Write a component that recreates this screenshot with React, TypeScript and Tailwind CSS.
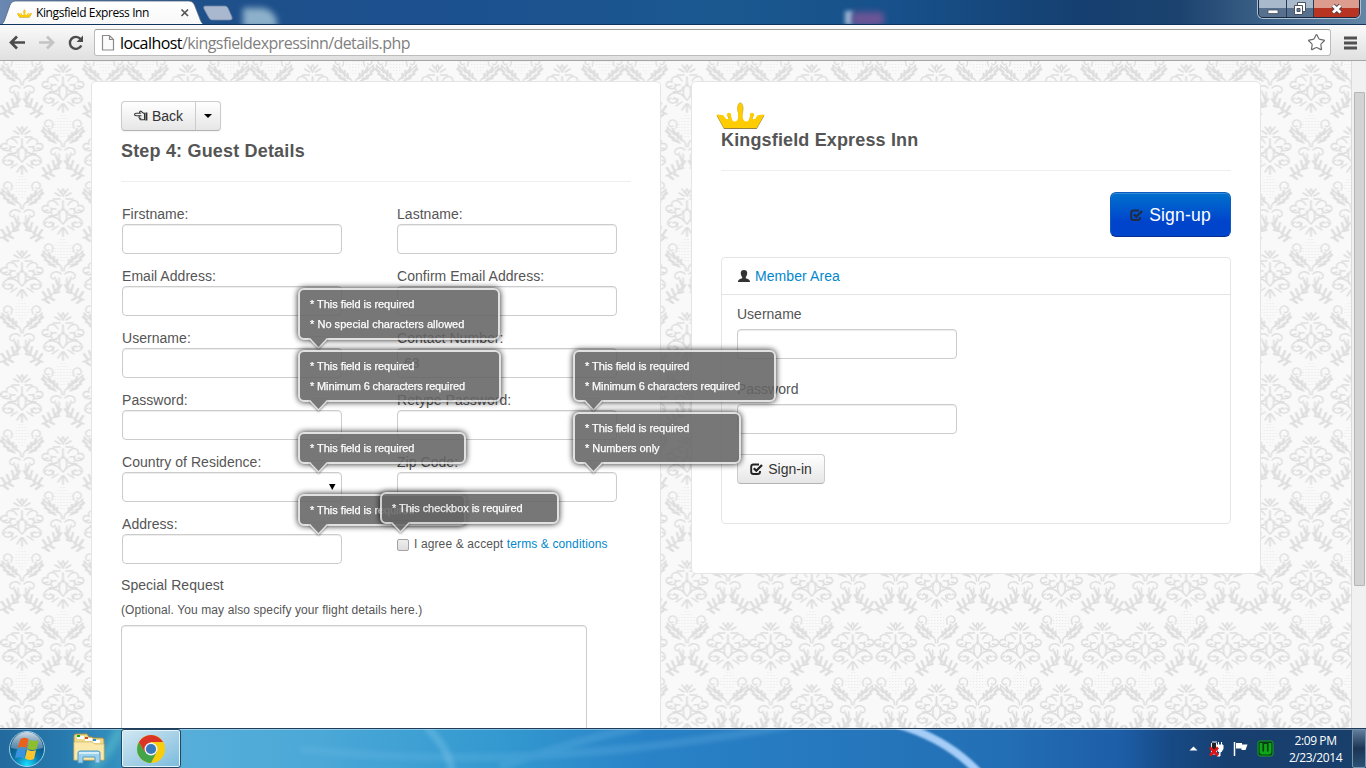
import React from "react";
import { Star } from "lucide-react";

function Damask() {
  return (
    <svg className="absolute inset-0 h-full w-full" aria-hidden="true">
      <defs>
        <g id="half" fill="none" stroke="#dedede" strokeWidth="1.5" strokeLinecap="round">
          <path d="M0 -25c2 2 2 4 0 7M3 -18l5 -3M3 -15l7 0M2 -21l3 -4M0 -13v9" />
          <path d="M5 -9c4 -7 12 -5 10 1c6 -2 8 4 3 6c-5 2 -8 -1 -6 -4M7 -5c4 -1 7 2 4 5M4 -3c1 4 5 6 10 5" />
          <path d="M0 -6c5 4 5 12 0 16M3 7c4 -5 11 -6 15 -1c4 5 -3 9 -7 6c-2 -3 1 -5 3 -3M5 12l6 4M1 14l4 6M0 14v8" />
          <path d="M6 1l7 1M15 -4l4 1M16 8l3 2M9 9l1 4" />
        </g>
        <g id="vine" fill="none" stroke="#dedede" strokeWidth="1.4" strokeLinecap="round">
          <path d="M11 38c-3 -6 2 -10 6 -7c3 3 0 7 -3 5M1 57c-1 -8 9 -8 19 -20M4 51c4 -4 7 -6 10 -12M7 53c7 -2 11 -7 13 -14" />
          <path strokeWidth="2.3" d="M6 50l0 -4M9 48l0 -5M13 44l1 -5M9 51l5 -1M13 48l5 -2M17 44l4 -3" />
          <path d="M2 60c4 -4 11 -2 10 3c-1 3 -5 2 -4 0M4 64c-2 8 4 17 17 22" />
          <path strokeWidth="2.3" d="M5 76l-3 -5M8 79l-4 -1M8 78l2 -7M12 82l3 -7M16 84l4 -6M13 84l-4 2M18 86l-4 3M5 71l2 -5" />
        </g>
        <g id="motif">
          <use href="#half" />
          <use href="#half" transform="scale(-1 1)" />
        </g>
        <g id="vines">
          <use href="#vine" />
          <use href="#vine" transform="scale(-1 1)" />
        </g>
        <pattern id="dots" width="3" height="3" patternUnits="userSpaceOnUse">
          <rect width="1" height="1" fill="#e8e8e8" />
        </pattern>
        <pattern id="damask" x="0.6" y="-33" width="124.8" height="124" patternUnits="userSpaceOnUse">
          <rect width="125" height="124" fill="#f9f9f9" />
          <path d="M62.4 84l12 14l-12 14l-12 -14zM21 20l10 14l-10 14l-10 -14zM104 20l10 14l-10 14l-10 -14z" fill="url(#dots)" />
          <use href="#motif" x="62.4" y="62" />
          <use href="#vines" x="62.4" y="62" />
          <use href="#vines" x="62.4" y="-62" />
          <use href="#motif" x="21.4" y="0" />
          <use href="#motif" x="21.4" y="124" />
          <use href="#motif" x="103.4" y="0" />
          <use href="#motif" x="103.4" y="124" />
          <use href="#vines" x="21.4" y="0" />
          <use href="#vines" x="103.4" y="0" />
        </pattern>
      </defs>
      <rect width="100%" height="100%" fill="url(#damask)" />
    </svg>
  );
}

const crownBody =
  "M.5 12.500L6 13Q8 13 8.500 15Q10.500 18.500 13 16.500L12 14h3Q16 20 19 19.500Q22 19 22.500 14L22 8h4.600L26.200 14Q27 19 30 19.500Q33 20 34 14h3L36 16.500Q38.500 18.500 40.500 15Q41 13 43 13L48.500 12.500L40.700 26H8z";

function Crown({ className }: { className: string }) {
  return (
    <svg viewBox="0 0 49 27" className={className}>
      <path d={crownBody} fill="#9a8142" transform="translate(0 .9)" />
      <g fill="#fc0">
        <path d={crownBody} />
        <ellipse cx="24.300" cy="6.500" rx="2.900" ry="5.800" stroke="#a58a3a" strokeWidth=".4" />
        <path d="M22.200 9h4.200v6h-4.200z" />
        <circle cx="13" cy="13" r="2.200" />
        <circle cx="36" cy="13" r="2.200" />
      </g>
    </svg>
  );
}

function CheckIcon({ className }: { className: string }) {
  return (
    <svg viewBox="0 0 13 12" width="13" height="12" className={className} fill="none" stroke="currentColor">
      <path d="M9 1.500H3.500Q1.200 1.500 1.200 3.800V8.700Q1.200 11 3.500 11H7.500Q10 11 10 8.700V8" strokeWidth="1.900" />
      <path d="M3.800 5.200L6.300 7.700L12 2" strokeWidth="2.300" />
    </svg>
  );
}

function HandIcon() {
  return (
    <svg viewBox="0 0 14 12" width="14" height="12" className="mr-[4px]" fill="none" stroke="#333" strokeWidth="1.100">
      <path d="M6 5.800H2Q.6 5.600 .6 4.400Q.7 3.200 2 3.200H6.200L5.600 2.300Q5.700 .9 7 1.200L9.500 3.200H10.500V9.800H7.200Q5.600 9.700 5.700 8.300Q4.600 7.600 5.100 6.700Q5.200 6 6 5.800zM6 5.800H7.500M5.800 8.200H7.300" />
      <path d="M12.400 2.500V10.500" strokeWidth="2" />
    </svg>
  );
}

function WindowControls() {
  return (
    <div className="absolute right-[6px] top-[-1px] flex h-[19px] overflow-hidden rounded-b-[5px] border border-[#1a2740] shadow-[0_0_0_1px_#a9bfd4]">
      <div className="flex w-[28px] items-center justify-center border-r border-[#283a54] bg-linear-to-b from-[#a8b9cc] from-45% to-[#56708e] to-50%">
        <svg width="14" height="14"><rect x="2" y="8" width="10" height="3.5" fill="#fff" stroke="#4b5362" strokeWidth=".8" /></svg>
      </div>
      <div className="flex w-[27px] items-center justify-center border-r border-[#283a54] bg-linear-to-b from-[#a8b9cc] from-45% to-[#56708e] to-50%">
        <svg width="14" height="14">
          <path d="M4.500 0.500h8v9h-8z" fill="#fff" stroke="#4b5362" />
          <path d="M1.500 3.500h8v9h-8z" fill="#fff" stroke="#4b5362" />
          <path d="M4 6.500h3v3h-3z" fill="#6a809b" stroke="#4b5362" />
        </svg>
      </div>
      <div className="flex w-[45px] items-center justify-center bg-linear-to-b from-[#dc9d8f] from-45% to-[#b83422] to-50%">
        <svg width="14" height="14">
          <path d="M3 3.500l7.500 7M10.500 3.500l-7.500 7" stroke="#56414a" strokeWidth="4.800" />
          <path d="M3 3.500l7.500 7M10.500 3.500l-7.500 7" stroke="#fff" strokeWidth="3" />
        </svg>
      </div>
    </div>
  );
}

function TitleBar() {
  return (
    <div className="relative h-[25px] overflow-hidden border-b border-[#12345f] bg-[linear-gradient(90deg,#6b88b2_0px,#1f5089_180px,#1c508f_430px,#1b5890_720px,#17508a_900px,#153f70_1080px,#1c436f_1180px,#6385a5_1366px)]">
      <div className="absolute left-[243px] top-[8px] h-[20px] w-[34px] rounded-tr-[16px] bg-[#a9c9da] opacity-80 blur-[3px]" />
      <div className="absolute left-[845px] top-[11px] h-[14px] w-[8px] bg-[#9dbad5] blur-[2px]" />
      <div className="absolute left-[852px] top-[12px] h-[14px] w-[32px] rounded bg-[#6c5596] blur-[3px]" />
      <svg className="absolute left-0 top-0" width="240" height="25">
        <defs>
          <linearGradient id="tab" x2="0" y2="1"><stop stopColor="#fff" /><stop offset="1" stopColor="#f8f8f8" /></linearGradient>
        </defs>
        <path d="M0 25c3 -1 4 -3 5 -6l5 -14q1.500 -4 5 -4h174q4 0 5.500 4l5.500 14c1.500 4 2.500 5.500 6 6z" fill="url(#tab)" stroke="#53667e" strokeWidth=".8" />
        <path d="M205 6h20q2 0 3 2l4 9q1 3 -2 3h-18q-2 0 -3 -2l-5 -9q-1 -3 1 -3z" fill="#a9b8cf" stroke="#7187a6" strokeWidth=".8" />
        <path d="M181.500 9.500l6.500 6.500M188 9.500l-6.500 6.500" stroke="#555" strokeWidth="1.700" />
      </svg>
      <div className="relative flex h-full items-center pl-[17px] pt-[2px]">
        <Crown className="h-[9px] w-[15px]" />
        <span className="ml-[4px] whitespace-nowrap font-['Open_Sans',sans-serif] text-[12px] tracking-[-0.4px] text-black">Kingsfield Express Inn</span>
      </div>
      <WindowControls />
    </div>
  );
}

function Toolbar() {
  return (
    <div className="flex h-[36px] items-center border-b border-[#a5a5a5] bg-linear-to-b from-[#fafafa] to-[#e0e0e0] pl-[9px] pr-[9px]">
      <svg width="78" height="20" fill="none" strokeWidth="2.700">
        <path d="M16 9.500H2.500M8 3.500l-6 6l6 6" stroke="#4c4c4c" />
        <path d="M30 9.500h13.500M38 3.500l6 6l-6 6" stroke="#c4c4c4" />
        <path d="M71.500 6a6 6 0 1 0 0.800 6.500" stroke="#4c4c4c" strokeWidth="2.400" />
        <path d="M74 2.500v6.500h-6.500z" fill="#4c4c4c" />
      </svg>
      <div className="ml-[7px] flex h-[27px] flex-1 items-center rounded-[3px] border border-[#bcbcbc] border-t-[#9d9d9d] bg-white pl-[6px] pr-[4px]">
        <svg width="14" height="18" fill="#fbfbfb" stroke="#8b8b8b" strokeWidth="1.200">
          <path d="M1.500 1.500h7l4 4v10.500h-11zM8.500 1.500v4h4" />
        </svg>
        <span className="ml-[5px] whitespace-nowrap font-['Open_Sans',sans-serif] text-[16px] leading-[24px] tracking-[-0.57px] text-[#7f7f7f]">
          <span className="text-black">localhost</span>/kingsfieldexpressinn/details.php
        </span>
        <Star className="ml-auto h-[19px] w-[19px] text-[#6b6b6b]" strokeWidth={1.5} />
      </div>
      <svg className="ml-[13px]" width="13" height="14"><path d="M0 2h13M0 7h13M0 12h13" stroke="#505050" strokeWidth="2.800" /></svg>
    </div>
  );
}

function Field({ label, value, select }: { label: string; value?: string; select?: boolean }) {
  return (
    <div className="h-[62px] w-[220px]">
      <div className="h-[20px] leading-[20px] tracking-[0.04px]">{label}</div>
      <div className="flex h-[30px] items-center rounded-[4px] border border-[#ccc] bg-white px-[6px] shadow-[inset_0_1px_1px_rgba(0,0,0,0.075)]">
        {value}
        {select && <svg className="ml-auto mr-[-1px]" width="7" height="7"><path d="M0 0h6.500l-3.250 6z" fill="#000" /></svg>}
      </div>
    </div>
  );
}

const fields: { label: string; value?: string; select?: boolean }[] = [
  { label: "Firstname:" },
  { label: "Lastname:" },
  { label: "Email Address:" },
  { label: "Confirm Email Address:" },
  { label: "Username:" },
  { label: "Contact Number:", value: "63" },
  { label: "Password:" },
  { label: "Retype Password:" },
  { label: "Country of Residence:", select: true },
  { label: "Zip Code:" },
  { label: "Address:" },
];

function GuestPanel() {
  return (
    <section className="h-[760px] w-[570px] rounded-[5px] border border-[#e5e5e5] bg-white px-[29px] pt-[19px]">
      <div className="flex h-[30px] w-[100px] rounded-[4px] border border-[#ccc] border-b-[#b3b3b3] bg-linear-to-b from-white to-[#e6e6e6] text-[#333] shadow-[0_1px_2px_rgba(0,0,0,0.05)]">
        <div className="flex w-[74px] items-center border-r border-[#ccc] pl-[12px]">
          <HandIcon />
          Back
        </div>
        <div className="flex flex-1 items-center justify-center"><svg width="8" height="4"><path d="M0 0h8l-4 4z" fill="#000" /></svg></div>
      </div>
      <h1 className="mt-[10px] text-[18px] font-bold leading-[20px] tracking-[0.18px]">Step 4: Guest Details</h1>
      <hr className="mb-[22px] mt-[20px] border-[#eee]" />
      <div className="ml-[1px] grid grid-cols-[275px_220px]">
        {fields.map((f) => <Field key={f.label} {...f} />)}
        <div className="flex h-[62px] items-start pt-[20px] text-[12px] leading-[20px]">
          <span className="mr-[5px] mt-[5px] h-[12px] w-[12px] rounded-[2px] border border-[#a3a3a3] bg-linear-to-b from-[#eee] to-[#ddd]" />
          <span className="whitespace-nowrap tracking-[0.12px]">I agree &amp; accept <a className="text-[#0088cc]">terms &amp; conditions</a></span>
        </div>
      </div>
      <div className="mt-[-1px] leading-[20px] tracking-[0.05px]">Special Request</div>
      <div className="mt-[5px] text-[12px] leading-[20px] tracking-[0.1px]">(Optional. You may also specify your flight details here.)</div>
      <div className="mt-[5px] h-[200px] w-[466px] rounded-[4px] border border-[#ccc] bg-white shadow-[inset_0_1px_1px_rgba(0,0,0,0.075)]" />
    </section>
  );
}

function MemberPanel() {
  return (
    <section className="h-[493px] w-[570px] rounded-[5px] border border-[#e5e5e5] bg-white px-[29px] pt-[20px]">
      <Crown className="ml-[-5px] h-[27px] w-[49px]" />
      <h2 className="mt-[1px] text-[18px] font-bold leading-[20px] tracking-[0.15px]">Kingsfield Express Inn</h2>
      <hr className="mb-[21px] mt-[20px] border-[#eee]" />
      <div className="flex justify-end">
        <div className="flex h-[45px] w-[121px] items-center justify-center gap-[6px] rounded-[6px] border border-[#0b5cc0] border-b-[#0a2f8c] bg-linear-to-b from-[#0070cc] to-[#0044cc] to-65% text-[17.5px] text-white shadow-[inset_0_1px_0_rgba(255,255,255,0.2)]">
          <CheckIcon className="text-[#222b3d]" />
          <span className="pt-[1px] tracking-[0.2px]">Sign-up</span>
        </div>
      </div>
      <div className="mt-[20px] h-[267px] rounded-[4px] border border-[#e5e5e5]">
        <div className="flex h-[37px] items-center border-b border-[#e5e5e5] pl-[16px]">
          <svg width="12" height="12"><path d="M6 0c4.500 0 3.500 5 1.800 7v1.200c2 .8 4.200 1 4.200 3.800h-12c0 -2.800 2.200 -3 4.200 -3.800v-1.200c-1.700 -2 -2.700 -7 1.800 -7z" fill="#333" /></svg>
          <a className="ml-[5px] tracking-[0.08px] text-[#0088cc]">Member Area</a>
        </div>
        <div className="px-[15px] pt-[9px]">
          <div className="leading-[20px]">Username</div>
          <div className="mt-[5px] h-[30px] w-[220px] rounded-[4px] border border-[#ccc] shadow-[inset_0_1px_1px_rgba(0,0,0,0.075)]" />
          <div className="mt-[20px] leading-[20px]">Password</div>
          <div className="mt-[5px] h-[30px] w-[220px] rounded-[4px] border border-[#ccc] shadow-[inset_0_1px_1px_rgba(0,0,0,0.075)]" />
          <div className="mt-[20px] flex h-[30px] w-[88px] items-center justify-center gap-[5px] rounded-[4px] border border-[#ccc] border-b-[#b3b3b3] bg-linear-to-b from-white to-[#e6e6e6] text-[#333]">
            <CheckIcon className="text-[#222]" />
            <span>Sign-in</span>
          </div>
        </div>
      </div>
    </section>
  );
}

function Tip({ place, lines }: { place: string; lines: string[] }) {
  return (
    <div className={`absolute opacity-[0.87] ${place}`}>
      <div className="rounded-[6px] border-2 border-[#ddd] bg-[#646464] px-[10px] py-[4px] text-[11px] leading-[20px] text-white shadow-[0_0_6px_#000]">
        {lines.map((l) => (
          <div
            key={l}
            className={`whitespace-nowrap [-webkit-text-stroke:0.25px_white] ${l.startsWith("Minimum") ? "tracking-[-0.13px]" : l.startsWith("No ") ? "tracking-[0.03px]" : "tracking-[-0.05px]"}`}
          >
            * {l}
          </div>
        ))}
      </div>
      <svg className="absolute left-[10px] top-full mt-[-3px] drop-shadow-[0_1px_1px_rgba(0,0,0,0.5)]" width="20" height="13">
        <path d="M1.500 0L10.500 10.500L19.500 0z" fill="#646464" />
        <path d="M2 2L10.500 11L19 2" fill="none" stroke="#ddd" strokeWidth="1.500" />
      </svg>
    </div>
  );
}

function Tips() {
  const req = "This field is required";
  return (
    <>
      <Tip place="left-[298px] top-[227px] w-[202px]" lines={[req, "No special characters allowed"]} />
      <Tip place="left-[298px] top-[289px] w-[203px]" lines={[req, "Minimum 6 characters required"]} />
      <Tip place="left-[573px] top-[289px] w-[203px]" lines={[req, "Minimum 6 characters required"]} />
      <Tip place="left-[573px] top-[351px] w-[168px]" lines={[req, "Numbers only"]} />
      <Tip place="left-[298px] top-[371px] w-[168px]" lines={[req]} />
      <Tip place="left-[298px] top-[433px] w-[168px]" lines={[req]} />
      <Tip place="left-[380px] top-[431px] w-[179px]" lines={["This checkbox is required"]} />
    </>
  );
}

function Scrollbar() {
  return (
    <div className="relative w-[15px] border-l border-[#dcdcdc] bg-[#f1f1f1] pl-[2px] pt-[31px]">
      <div className="h-[494px] w-[11px] rounded-[1px] border border-[#b5b5b5] bg-[#d3d3d3]" />
    </div>
  );
}

function StartOrb() {
  return (
    <svg width="38" height="38" viewBox="0 0 38 38">
      <defs>
        <radialGradient id="orb" cx=".5" cy=".95" r=".9"><stop stopColor="#18e0ff" /><stop offset=".4" stopColor="#0c79ad" /><stop offset="1" stopColor="#123c66" /></radialGradient>
        <linearGradient id="gloss" x2="0" y2="1"><stop stopColor="#e6f1f8" stopOpacity=".9" /><stop offset="1" stopColor="#86a9c4" stopOpacity=".5" /></linearGradient>
      </defs>
      <circle cx="19" cy="19" r="17.500" fill="url(#orb)" stroke="#9ad2ec" strokeWidth="1" />
      <path d="M3 18a16 16 0 0 1 32 0q-16 4 -32 0z" fill="url(#gloss)" />
      <path d="M12.500 9q4 -2.500 8 0l-2 9q-4 -2.500 -9 0z" fill="#e9611d" />
      <path d="M21.500 9.500q4 2.500 9 0.500l-2 9q-5 2 -9 -0.500z" fill="#8dbe2d" />
      <path d="M9 19.500q4 -2 9 0l-2 9q-4 -2.500 -9 0z" fill="#3b92dd" />
      <path d="M19 19.500q4 2.500 9 0.500l-2 9q-5 2 -9 -0.500z" fill="#fdc52b" />
    </svg>
  );
}

function Explorer() {
  return (
    <svg width="34" height="32" viewBox="0 0 34 32">
      <path d="M2 7V3q0 -2 2 -2h11l2 3h3l1 1h9q2 0 2 2v20h-30z" fill="#efd98b" stroke="#a98f4a" />
      <path d="M5 3h7v3h-7zM13 5h7v3h-7zM21 7h7v3h-7z" fill="#fff" />
      <path d="M5 2h3v2h-3z" fill="#18a81e" /><path d="M13 4h3v2h-3z" fill="#d24a27" /><path d="M21 6h3v2h-3z" fill="#278ed6" />
      <path d="M2 9h18l3 2h9v16h-30z" fill="#fbe9ab" stroke="#d3b86c" strokeWidth=".7" />
      <path d="M6 30V20q0 -2 2 -2h18q2 0 2 2v10h-5v-6h-12v6z" fill="#9bd1ec" stroke="#4f9bc6" />
      <path d="M7 19h20v2h-20z" fill="#d5effa" />
    </svg>
  );
}

function Chrome() {
  return (
    <svg width="30" height="30" viewBox="-15 -15 30 30">
      <circle r="14" fill="#f8cd0b" />
      <path d="M-12.120 -7A14 14 0 0 0 0 14L5.600 3.200L0 0L-6 3z" fill="#44a548" />
      <path d="M-12.120 -7A14 14 0 0 1 12.120 -7H0L-6 3.200z" fill="#db3325" />
      <circle r="6.500" fill="#f3f3f3" /><circle r="5.100" fill="#3779bd" />
    </svg>
  );
}

function Taskbar() {
  return (
    <footer className="relative flex h-[40px] items-center overflow-hidden border-t border-[#203c58] bg-[linear-gradient(90deg,#236a9e_0px,#2779ad_60px,#338fbe_115px,#56aed9_185px,#4ba8d7_320px,#3399d0_500px,#2982c7_650px,#236fb5_1000px,#1d5ea8_1120px,#174a85_1170px,#173f70_1230px,#193f6a_1366px)]">
      <svg className="absolute inset-0" width="1366" height="40" fill="none">
        <path d="M896 -5Q948 10 980 45" stroke="#a5cdf7" strokeWidth="8" className="blur-[1px]" />
        <path d="M500 38Q580 10 640 -2M300 20Q530 45 790 -4" stroke="#70bbe8" strokeOpacity=".25" strokeWidth="8" className="blur-[2px]" />
        <path d="M426 -2Q448 18 452 42" stroke="#8fd0f0" strokeOpacity=".3" strokeWidth="8" className="blur-[2px]" />
        <path d="M92 40Q112 20 120 0" stroke="#6ed5d5" strokeOpacity=".4" strokeWidth="10" className="blur-[3px]" />
        <path d="M0 .5H1366" stroke="#fff" strokeOpacity=".4" />
      </svg>
      <div className="relative flex h-full w-full items-center">
        <div className="ml-[8px] w-[38px]"><StartOrb /></div>
        <div className="ml-[26px] w-[34px]"><Explorer /></div>
        <div className="ml-[15px] flex h-[39px] w-[60px] items-center justify-center rounded-[3px] border border-[#244863] bg-linear-to-br from-[#d3e8f2] to-[#7bbbdc] shadow-[inset_0_0_0_1px_#e4f4fc]"><Chrome /></div>
        <div className="ml-auto flex h-full items-center">
          <svg width="9" height="5"><path d="M0.500 4.500l4 -4l4 4z" fill="#fff" /></svg>
          <svg className="ml-[11px]" width="16" height="18">
            <path d="M3 2h5M2.500 3v11h5v-11" fill="#222" stroke="#eee" />
            <path d="M8 5h6v4l-2 3h-2l-2 -3zM9.500 5v-3M12.500 5v-3M11 12v4h-3" fill="#fff" stroke="#fff" />
            <path d="M1 7.500l8 8M9 7.500l-8 8" stroke="#e31212" strokeWidth="2.600" />
          </svg>
          <svg className="ml-[8px]" width="16" height="16">
            <path d="M1.500 1v14" stroke="#fff" strokeWidth="1.500" /><path d="M3 2h6v1.500h5.500l-2 5.500h-4v-1.500h-5.500z" fill="#fff" />
          </svg>
          <svg className="ml-[8px]" width="17" height="17">
            <rect x="1" y="1" width="15" height="15" rx="2" fill="#073c17" stroke="#18a421" />
            <path d="M4 3v9q0 1 1 1h7q1 0 1 -1v-9M8.500 4v8" fill="none" stroke="#0da817" strokeWidth="2.800" />
          </svg>
          <div className="ml-[13px] w-[57px] whitespace-nowrap text-center font-['Open_Sans',sans-serif] text-[12px] leading-[17px] tracking-[-0.4px] text-white">
            <div>2:09 PM</div><div>2/23/2014</div>
          </div>
          <div className="ml-[8px] h-[39px] w-[14px] rounded-[2px] border border-[#7892ac] bg-linear-to-b from-[#627e9d] via-[#1c3554] to-[#2b5277]" />
        </div>
      </div>
    </footer>
  );
}

export default function App() {
  return (
    <div className="flex h-[768px] w-[1366px] flex-col overflow-hidden font-['Liberation_Sans',Arial,sans-serif] text-[14px] text-[#555]">
      <TitleBar />
      <Toolbar />
      <div className="flex min-h-0 flex-1">
        <main className="relative flex-1 overflow-hidden">
          <Damask />
          <div className="relative flex items-start gap-[30px] pl-[91px] pt-[20px]">
            <GuestPanel />
            <MemberPanel />
          </div>
          <Tips />
        </main>
        <Scrollbar />
      </div>
      <Taskbar />
    </div>
  );
}
